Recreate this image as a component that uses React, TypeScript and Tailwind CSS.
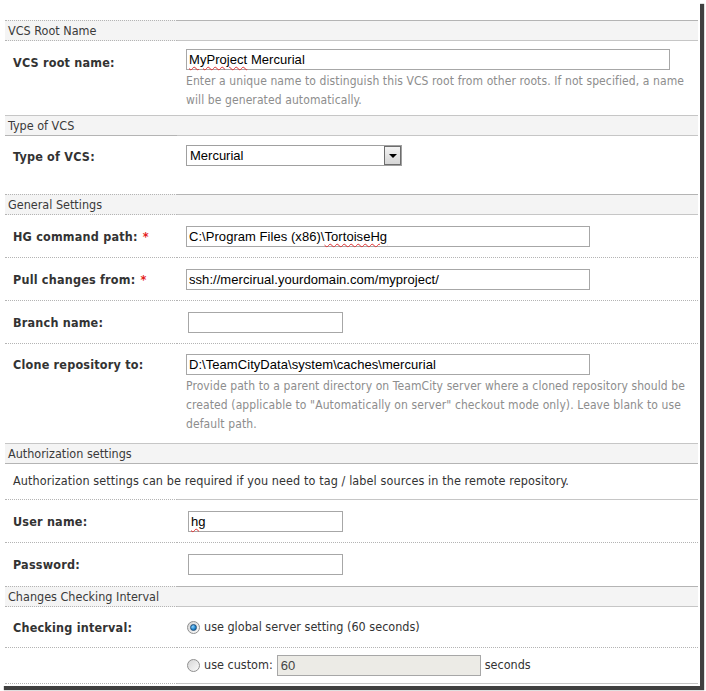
import React from 'react';

type Edge = 'dotted' | 'solid' | 'split' | 'none';

const UI = '"DejaVu Sans Condensed", "DejaVu Sans", sans-serif';
const FIELD = '"Liberation Sans", Arial, sans-serif';

// bottom border classes for the left / right cell of a row
const leftEdge = (e: Edge) =>
  e === 'none' ? '' : e === 'solid' ? 'border-b border-solid border-[#c6c6c6]' : 'border-b border-dotted border-[#b4b4b4]';
const rightEdge = (e: Edge) =>
  e === 'none' ? '' : e === 'dotted' ? 'border-b border-dotted border-[#b4b4b4]' : 'border-b border-solid border-[#c6c6c6]';

const SectionHeader: React.FC<{ title: string; top: 'dotted' | 'solid'; bottom: Edge }> = ({ title, top, bottom }) => {
  const topCls = top === 'dotted' ? 'border-t border-dotted border-t-[#b4b4b4]' : 'border-t border-solid border-t-[#c6c6c6]';
  return (
    <div className="flex bg-[#f4f4f4]">
      <div className={`w-[172px] h-[21px] ${topCls} ${leftEdge(bottom)}`}>
        <div className="pl-[3px] h-[19px] leading-[20px] text-[12.5px] text-[#3a3a3a] whitespace-nowrap">{title}</div>
      </div>
      <div className={`flex-1 h-[21px] ${topCls} ${rightEdge(bottom)}`} />
    </div>
  );
};

const Row: React.FC<{
  label?: React.ReactNode;
  required?: boolean;
  bottom: Edge;
  align?: 'center' | 'top';
  labelPad?: string;
  children?: React.ReactNode;
  hClass: string;
}> = ({ label, required, bottom, align = 'center', labelPad = '', children, hClass }) => (
  <div className="flex">
    <div
      className={`w-[172px] ${hClass} ${leftEdge(bottom)} pl-[8px] flex ${align === 'center' ? 'items-center' : 'items-start'} ${labelPad}`}
    >
      {label && (
        <span className="font-bold text-[12.5px] tracking-[0.2px] text-[#333] whitespace-nowrap leading-[19px]">
          {label}
          {required && <span className="text-[#e41d1d] font-bold ml-[5px]">*</span>}
        </span>
      )}
    </div>
    <div className={`flex-1 ${hClass} ${rightEdge(bottom)} pl-[9px] flex ${align === 'center' ? 'items-center' : 'flex-col'}`}>
      {children}
    </div>
  </div>
);

const TextBox: React.FC<{ w: string; children?: React.ReactNode; className?: string }> = ({ w, children, className = '' }) => (
  <div
    className={`${w} h-[21px] border border-[#a7a7a7] bg-white pl-[2px] text-[13px] tracking-[0.05px] leading-[19px] text-black whitespace-nowrap ${className}`}
    style={{ fontFamily: FIELD }}
  >
    {children}
  </div>
);

const Squiggle: React.FC<{ children: React.ReactNode }> = ({ children }) => (
  <span className="underline decoration-wavy decoration-[#e03030] decoration-1 underline-offset-[2px]">{children}</span>
);

const Help: React.FC<{ lines: string[] }> = ({ lines }) => (
  <div className="text-[12px] tracking-[0.1px] text-[#8d8d8d] leading-[19px] mt-[2px]">
    {lines.map((l, i) => (
      <div key={i} className="whitespace-nowrap">{l}</div>
    ))}
  </div>
);

const Radio: React.FC<{ checked?: boolean }> = ({ checked }) => (
  <span className="relative inline-flex w-[13px] h-[13px] rounded-full border border-[#8f8f8f] bg-gradient-to-br from-[#d6d6d6] to-[#fafafa] items-center justify-center">
    {checked && <span className="w-[7px] h-[7px] rounded-full bg-[radial-gradient(circle_at_35%_35%,#8fd3ff,#1a7fc8_60%,#0c5a9a)] border border-[#1f4f7a]" />}
  </span>
);

export default function App() {
  return (
    <div className="w-[706px] h-[691px] bg-white overflow-hidden" style={{ fontFamily: UI }}>
      <div className="w-[700px] h-[686px] bg-white shadow-[4px_4px_1px_rgba(0,0,0,0.75)] pl-[5px] pr-[2px] pt-[20px]">
        <SectionHeader title="VCS Root Name" top="dotted" bottom="split" />
        <Row label="VCS root name:" hClass="h-[74px]" bottom="none" align="top" labelPad="pt-[12px]">
          <div className="pt-[8px]">
            <TextBox w="w-[484px]">
              <Squiggle>MyProject</Squiggle> Mercurial
            </TextBox>
          </div>
          <Help
            lines={[
              'Enter a unique name to distinguish this VCS root from other roots. If not specified, a name',
              'will be generated automatically.',
            ]}
          />
        </Row>

        <SectionHeader title="Type of VCS" top="solid" bottom="split" />
        <Row label="Type of VCS:" hClass="h-[58px]" bottom="none" align="top" labelPad="pt-[11px]">
          <div className="pt-[9px]">
            <div
              className="w-[216px] h-[21px] border border-[#a0a0a0] bg-white flex items-stretch text-[13px] text-black"
              style={{ fontFamily: FIELD }}
            >
              <div className="flex-1 pl-[3px] leading-[19px]">Mercurial</div>
              <div className="w-[17px] border border-[#6d6d6d] bg-gradient-to-b from-[#f3f3f3] to-[#d6d6d6] flex items-center justify-center">
                <span className="w-0 h-0 border-l-[4px] border-r-[4px] border-t-[4px] border-l-transparent border-r-transparent border-t-black" />
              </div>
            </div>
          </div>
        </Row>

        <SectionHeader title="General Settings" top="dotted" bottom="split" />
        <Row label="HG command path:" required hClass="h-[43px]" bottom="dotted">
          <TextBox w="w-[404px]">
            C:\Program Files (x86)\<Squiggle>TortoiseHg</Squiggle>
          </TextBox>
        </Row>
        <Row label="Pull changes from:" required hClass="h-[43px]" bottom="dotted">
          <TextBox w="w-[404px]">ssh://mercirual.yourdomain.com/myproject/</TextBox>
        </Row>
        <Row label="Branch name:" hClass="h-[43px]" bottom="dotted">
          <TextBox w="w-[155px]" className="ml-[2px]" />
        </Row>
        <Row label="Clone repository to:" hClass="h-[99px]" bottom="none" align="top" labelPad="pt-[11px]">
          <div className="pt-[10px]">
            <TextBox w="w-[404px]">D:\TeamCityData\system\caches\mercurial</TextBox>
          </div>
          <Help
            lines={[
              'Provide path to a parent directory on TeamCity server where a cloned repository should be',
              'created (applicable to "Automatically on server" checkout mode only). Leave blank to use',
              'default path.',
            ]}
          />
        </Row>

        <SectionHeader title="Authorization settings" top="solid" bottom="dotted" />
        <div className="flex">
          <div className="w-[172px] h-[36px] border-b border-dotted border-[#b4b4b4] pl-[8px] flex items-center">
            <span className="text-[12.5px] tracking-[0.1px] text-[#333] whitespace-nowrap">
              Authorization settings can be required if you need to tag / label sources in the remote repository.
            </span>
          </div>
          <div className="flex-1 h-[36px] border-b border-solid border-[#c6c6c6]" />
        </div>
        <Row label="User name:" hClass="h-[43px]" bottom="dotted">
          <TextBox w="w-[155px]" className="ml-[2px]">
            <Squiggle>hg</Squiggle>
          </TextBox>
        </Row>
        <Row label="Password:" hClass="h-[43px]" bottom="none">
          <TextBox w="w-[155px]" className="ml-[2px]" />
        </Row>

        <SectionHeader title="Changes Checking Interval" top="dotted" bottom="split" />
        <Row label="Checking interval:" hClass="h-[41px]" bottom="dotted">
          <div className="flex items-center ml-[1px] text-[12.5px] text-[#333]">
            <Radio checked />
            <span className="ml-[4px]">use global server setting (60 seconds)</span>
          </div>
        </Row>
        <Row hClass="h-[36px]" bottom="split">
          <div className="flex items-center ml-[1px] text-[12.5px] text-[#333]">
            <Radio />
            <span className="ml-[4px]">use custom:</span>
            <div
              className="ml-[4px] w-[204px] h-[21px] border border-[#a7a7a7] bg-[#ecebe6] pl-[3px] text-[13px] leading-[19px] text-[#444]"
              style={{ fontFamily: FIELD }}
            >
              60
            </div>
            <span className="ml-[4px]">seconds</span>
          </div>
        </Row>
      </div>
    </div>
  );
}
